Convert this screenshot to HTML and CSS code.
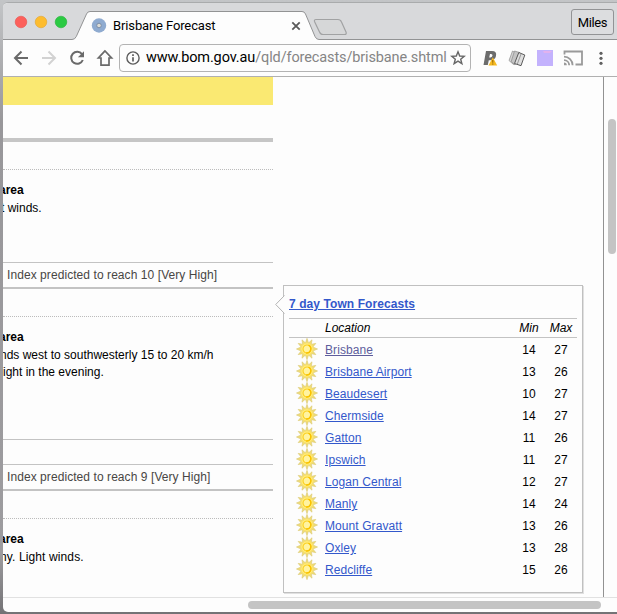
FILE: index.html
```
<!DOCTYPE html>
<html lang="en">
<head>
<meta charset="utf-8">
<title>Brisbane Forecast</title>
<link rel="stylesheet" href="styles.css">
</head>
<body>
<svg width="0" height="0" class="defs" aria-hidden="true">
  <defs>
    <symbol id="sun" viewBox="-11 -11 22 22">
      <path d="M0-10.6 1.500-6 5-9.200 4.300-4.700 8.800-5.600 5.800-2 10.500 0 5.800 2 8.800 5.600 4.300 4.700 5 9.200 1.500 6 0 10.600-1.500 6-5 9.200-4.300 4.700-8.800 5.600-5.800 2-10.500 0-5.800-2-8.800-5.600-4.300-4.700-5-9.200-1.500-6Z" fill="#f1dc72" stroke="#dccb78" stroke-width=".7"/>
      <circle r="6.500" fill="#fbe268"/>
      <circle r="5.400" fill="#fff08c"/>
      <circle r="4" fill="#fff3a0" stroke="#fbd022" stroke-width="1.200"/>
      <path d="M1.500-3.900A4.200 4.200 0 0 1-1 4" fill="none" stroke="#fac300" stroke-width="1.500"/>
    </symbol>
  </defs>
</svg>
<div class="window">
  <div class="strip">
    <svg class="tabs" width="614" height="37" viewBox="3 3 614 37" aria-hidden="true">
      <path d="M3 39.500H72Q75 39.500 76.300 36.500L86.500 14Q87.500 11.500 90 11.500H302Q304.500 11.500 305.500 14L315 36.500Q316.300 39.500 319 39.500H617V40.500H3Z" fill="#fdfdfd"/>
      <path d="M3 39.500H72Q75 39.500 76.300 36.500L86.500 14Q87.500 11.500 90 11.500H302Q304.500 11.500 305.500 14L315 36.500Q316.300 39.500 319 39.500H617" fill="none" stroke="#929394"/>
      <path d="M316 19.500H338Q340.500 19.500 341.500 22L346 32Q347 34.500 344.500 34.500H323Q320.500 34.500 319.500 32L314.500 21.500Q314 19.500 316 19.500Z" fill="#d6d7d8" stroke="#a1a2a3" stroke-width="1.200"/>
      <circle cx="21" cy="22" r="5.800" fill="#fc605b" stroke="#e6514c" stroke-width=".6"/>
      <circle cx="41" cy="22" r="5.800" fill="#fdbc2e" stroke="#e3a32b" stroke-width=".6"/>
      <circle cx="61" cy="22" r="5.800" fill="#2bca43" stroke="#24b035" stroke-width=".6"/>
      <circle cx="99" cy="25.500" r="7.200" fill="#8fabd0"/>
      <circle cx="99" cy="25.500" r="2.300" fill="#dcdcd6" stroke="#7c8ea8"/>
      <path d="M292.300 22.300 299.700 29.700M299.700 22.300 292.300 29.700" stroke="#5a5a5a" stroke-width="1.800"/>
    </svg>
    <div class="tab-title">Brisbane Forecast</div>
    <div class="profile">Miles</div>
  </div>
  <div class="toolbar">
    <svg class="nav" width="116" height="36" viewBox="3 40 116 36" fill="none" stroke-width="2" aria-hidden="true">
      <path d="M28 58H15.500M21.500 51.500 15 58 21.500 64.500" stroke="#6a6a6a"/>
      <path d="M42 58H54.500M48.500 51.500 55 58 48.500 64.500" stroke="#d2d2d2"/>
      <path d="M82 54.200A6 6 0 1 0 82.800 60" stroke="#6a6a6a"/><path d="M84 51.200V57.300H77.900Z" fill="#6a6a6a"/>
      <path d="M105 50.900 98.400 58H101V65.100H109V58H111.600Z" stroke="#6a6a6a" stroke-width="1.700"/>
    </svg>
    <div class="address">
      <svg width="14" height="14" viewBox="0 0 14 14" fill="none" stroke="#5c5c5c" aria-hidden="true"><circle cx="7" cy="7" r="6.100" stroke-width="1.400"/><path d="M7 6.200V10.600M7 3.300V5" stroke-width="1.700"/></svg>
      <div class="url"><span>www.bom.gov.au</span>/qld/forecasts/brisbane.shtml</div>
      <svg class="star" width="16" height="16" viewBox="0 0 16 16" fill="none" stroke="#686868" stroke-width="1.400" aria-hidden="true"><path d="M8 1.800 9.700 6 14.200 6.300 10.700 9.200 11.900 13.700 8 11.200 4.100 13.700 5.300 9.200 1.800 6.300 6.300 6Z"/></svg>
    </div>
    <svg width="146" height="36" viewBox="471 40 146 36" aria-hidden="true">
      <path d="M486 51H492Q497 51 496 56Q495 60.300 490 60.300H488.800L487.800 65H483.500ZM490 54 489.200 57.500H490.500Q492.300 57.300 492.500 55.600Q492.600 54 491 54Z" fill="#6c6c6c" fill-rule="evenodd"/>
      <path d="M492.800 57.200 497.200 65.500H488.500Z" fill="#f5b921"/><path d="M492.800 60V62.700M492.800 63.500V64.600" stroke="#8e5d00"/>
      <path d="M512.500 51 509 60.500 513.500 64.500 517.500 54Z" fill="#d4d4d4" stroke="#8c8c8c" stroke-width=".7"/>
      <path d="M514.500 51 511.200 61.500 515 65 519.500 52.500Z" fill="#c4c4c4" stroke="#8a8a8a" stroke-width=".7"/>
      <path d="M518.800 52.500 524.800 55 521 65.700 514.500 63.500Z" fill="#dedede" stroke="#4c4c4c" stroke-width=".9"/><path d="M521 54 517.300 64" stroke="#999"/>
      <rect x="537" y="50" width="16" height="16" fill="#c3b2fd"/><path d="M543 51H552L550 53H544Z" fill="#e2b2ee"/>
      <g fill="none" stroke="#9a9a9a" stroke-width="1.800"><path d="M564.500 54.500V51.500H582V64.500H575.500"/><path d="M564 56.700A8.600 8.600 0 0 1 572.600 65.300M564 60.200A5.200 5.200 0 0 1 569.200 65.300"/></g><path d="M564 62.500A2.800 2.800 0 0 1 566.800 65.300H564Z" fill="#9a9a9a"/>
      <g fill="#626262"><circle cx="601" cy="53.300" r="1.600"/><circle cx="601" cy="58.300" r="1.600"/><circle cx="601" cy="63.300" r="1.600"/></g>
    </svg>
  </div>
  <div class="view">
    <main class="page">
      <div class="days">
        <div class="banner"></div>
        <div class="heading"></div>
        <section class="day first">
          <h3>area</h3>
          <p class="calm">t winds.</p>
        </section>
        <div class="uv">Index predicted to reach 10 [Very High]</div>
        <div class="gap"></div>
        <section class="day second">
          <h3>area</h3>
          <p class="west">nds west to southwesterly 15 to 20 km/h</p>
          <p class="evening">ight in the evening.</p>
        </section>
        <div class="spacer"></div>
        <div class="uv">Index predicted to reach 9 [Very High]</div>
        <div class="gap"></div>
        <section class="day">
          <h3>area</h3>
          <p class="sunny">ny. Light winds.</p>
        </section>
      </div>
      <aside class="towns">
        <svg class="pointer" width="10" height="20" viewBox="0 0 10 20" aria-hidden="true"><path d="M10 .5H9.500L.7 9.500 9.500 18.500H10" fill="#fdfdfd"/><path d="M9.500 .5 .7 9.500 9.500 18.500" fill="none" stroke="#b4b4b4"/></svg>
        <h2><a>7 day Town Forecasts</a></h2>
        <div class="row head"><span></span><span>Location</span><span>Min</span><span>Max</span></div>
        <div class="row"><svg><use href="#sun"/></svg><a class="visited">Brisbane</a><b>14</b><b>27</b></div>
        <div class="row"><svg><use href="#sun"/></svg><a>Brisbane Airport</a><b>13</b><b>26</b></div>
        <div class="row"><svg><use href="#sun"/></svg><a>Beaudesert</a><b>10</b><b>27</b></div>
        <div class="row"><svg><use href="#sun"/></svg><a>Chermside</a><b>14</b><b>27</b></div>
        <div class="row"><svg><use href="#sun"/></svg><a>Gatton</a><b>11</b><b>26</b></div>
        <div class="row"><svg><use href="#sun"/></svg><a>Ipswich</a><b>11</b><b>27</b></div>
        <div class="row"><svg><use href="#sun"/></svg><a>Logan Central</a><b>12</b><b>27</b></div>
        <div class="row"><svg><use href="#sun"/></svg><a>Manly</a><b>14</b><b>24</b></div>
        <div class="row"><svg><use href="#sun"/></svg><a>Mount Gravatt</a><b>13</b><b>26</b></div>
        <div class="row"><svg><use href="#sun"/></svg><a>Oxley</a><b>13</b><b>28</b></div>
        <div class="row"><svg><use href="#sun"/></svg><a>Redcliffe</a><b>15</b><b>26</b></div>
      </aside>
    </main>
    <div class="vscroll"><div></div></div>
  </div>
  <div class="hscroll"><div></div></div>
</div>
</body>
</html>
```
FILE: styles.css
```
* { box-sizing: border-box; }
body {
  margin: 0;
  height: 614px;
  padding: 2px 0 0 3px;
  overflow: hidden;
  background: linear-gradient(#c3c5c7, #98979a 20%, #9d9c9f 90%, #737275);
  font: 12px/18px "Liberation Sans", Arial, sans-serif;
  color: #000;
}
.defs { position: absolute; }
.window {
  height: 610px;
  border-top: 1px solid #a9abac;
  border-radius: 5px 0 0 5px;
  overflow: hidden;
  background: #fdfdfd;
}
.strip {
  position: relative;
  display: flex;
  justify-content: space-between;
  height: 37px;
  padding: 6px 3px 0 110px;
  background: #d8d9db;
}
.tabs { position: absolute; left: 0; top: 0; }
.tab-title {
  position: relative;
  padding-top: 7px;
  font: 13px/20px Roboto, sans-serif;
  letter-spacing: -.12px;
}
.profile {
  position: relative;
  width: 43px;
  height: 26px;
  border: 1px solid #929395;
  border-radius: 3px;
  background: #dcdddf;
  font: 13px/26px Roboto, sans-serif;
  letter-spacing: -.4px;
  text-align: center;
}
.toolbar {
  display: flex;
  height: 37px;
  border-bottom: 1px solid #b0b0b0;
}
.toolbar > svg { flex: none; }
.address {
  display: flex;
  flex: none;
  align-items: center;
  width: 352px;
  height: 28px;
  margin-top: 4px;
  padding-left: 6px;
  border: 1px solid #b3b3b3;
  border-radius: 4px;
}
.address svg { flex: none; }
.url {
  width: 304px;
  margin-left: 6px;
  color: #858585;
  font: 14.500px/26px Roboto, sans-serif;
  letter-spacing: -.12px;
  white-space: nowrap;
}
.url span { color: #000; }
.view { display: flex; height: 520px; }
.page {
  display: flex;
  width: 601px;
  border-right: 1px solid #929292;
}
.vscroll { padding: 42px 0 0 4px; }
.vscroll div {
  width: 8px;
  height: 135px;
  border-radius: 4px;
  background: #c4c4c4;
}
.days { width: 270px; overflow: hidden; white-space: nowrap; }
.banner { height: 28px; background: #fae972; }
.heading {
  height: 65px;
  padding-top: 33px;
  border-bottom: 1px dotted #bcbcbc;
}
.heading::before {
  content: "";
  display: block;
  height: 4px;
  background: #c6c6c6;
}
h3, p { margin: 0; font-size: 12px; line-height: 18px; }
h3 { margin-left: -4px; }
.day { padding-top: 11px; }
.first { height: 92px; }
.second { height: 122px; }
.second p + p { line-height: 17px; }
.calm { margin-left: -2px; }
.west { margin-left: -3px; }
.evening { margin-left: 0; }
.sunny { margin-left: -3px; letter-spacing: .12px; }
.uv {
  height: 27px;
  padding: 4px 0 0 4px;
  border: solid #c3c3c3;
  border-width: 1px 0 2px;
  color: #484644;
  line-height: 17px;
  letter-spacing: .07px;
}
.gap { height: 28px; border-bottom: 1px dotted #bcbcbc; }
.spacer { height: 25px; border-top: 1px solid #c3c3c3; }
.towns {
  position: relative;
  width: 300px;
  height: 308px;
  margin: 208px 0 0 10px;
  padding: 0 5px;
  border: 1px solid #c0c0c0;
  box-shadow: 1px 1px 0 #e0e0e0;
}
.pointer { position: absolute; left: -9px; top: 9px; }
a { color: #3358cb; text-decoration: underline; text-underline-offset: 1px; letter-spacing: .08px; }
.visited { color: #5e5d9c; }
h2 { height: 32px; margin: 0; padding-top: 9px; font-size: 12px; line-height: 18px; }
.row {
  display: grid;
  grid-template-columns: 36px 188px 32px 32px;
  height: 22px;
  line-height: 22px;
}
.row svg { width: 22px; height: 22px; margin: -1px 0 0 7px; }
.row b, .head span:nth-child(n+3) { text-align: center; font-weight: normal; }
.head {
  height: 20px;
  margin-bottom: 1px;
  border: solid #c3c3c3;
  border-width: 1px 0;
  font-style: italic;
  line-height: 18px;
}
.hscroll {
  height: 14px;
  padding: 3px 0 0 245px;
  border-top: 1px solid #e1e1e1;
}
.hscroll div {
  width: 353px;
  height: 8px;
  border-radius: 4px;
  background: #c4c4c4;
}
```
